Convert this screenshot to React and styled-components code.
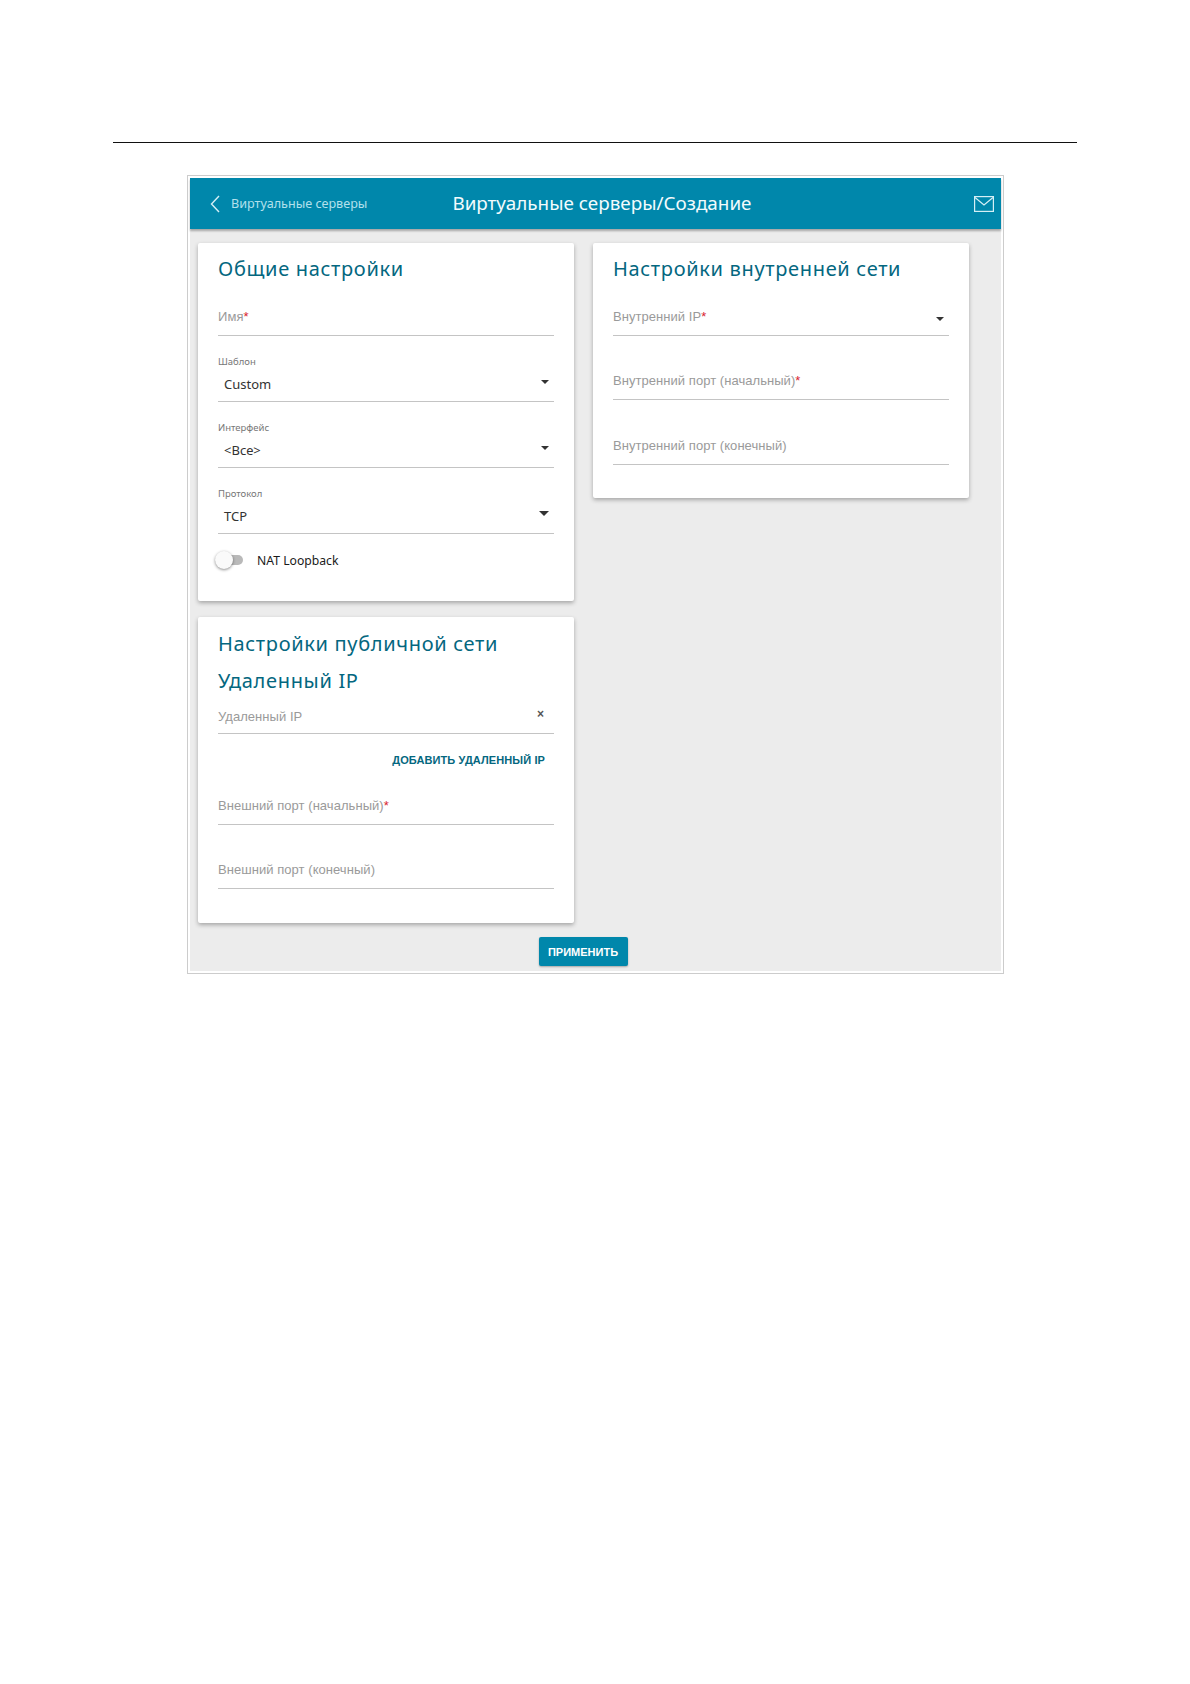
import React from 'react';
import styled, { createGlobalStyle } from 'styled-components';

const GlobalStyle = createGlobalStyle`
  html, body {
    margin: 0;
    padding: 0;
    background: #fff;
  }
  * {
    box-sizing: border-box;
  }
`;

const Page = styled.div`
  width: 1190px;
  height: 1684px;
  padding-top: 142px;
  background: #fff;
  font-family: 'Noto Sans', sans-serif;
`;

const Rule = styled.div`
  width: 964px;
  height: 1px;
  margin-left: 113px;
  background: #111;
`;

const Frame = styled.div`
  width: 817px;
  height: 799px;
  margin: 32px 0 0 187px;
  padding: 2px;
  border: 1px solid #ccc;
  background: #fff;
`;

const Screen = styled.div`
  height: 100%;
  display: flex;
  flex-direction: column;
  background: #ececec;
`;

const Header = styled.header`
  height: 51px;
  flex: none;
  display: flex;
  align-items: center;
  padding: 0 7px 0 20px;
  background: #0087ab;
  box-shadow: 0 2px 2px rgba(0, 0, 0, 0.3);
`;

const BackLink = styled.div`
  flex: none;
  display: flex;
  align-items: center;
  gap: 11px;
  font-size: 12.6px;
  color: #b3e0ec;
  white-space: nowrap;

  svg {
    flex: none;
  }
`;

const HeaderTitle = styled.h1`
  margin: 0 0 2px 85px;
  font-size: 18.85px;
  font-weight: 400;
  color: #f2fbfd;
  white-space: nowrap;
`;

const MailIcon = styled.svg`
  margin-left: auto;
  display: block;
`;

const Body = styled.div`
  flex: none;
  display: flex;
  gap: 19px;
  align-items: flex-start;
  padding: 14px 0 0 8px;
`;

const Column = styled.div`
  width: 376px;
  display: flex;
  flex-direction: column;
  gap: 16px;
`;

const Card = styled.section`
  padding: ${p => p.$top}px 20px ${p => p.$bottom}px;
  background: #fff;
  border-radius: 2px;
  box-shadow: 0 2px 4px rgba(0, 0, 0, 0.3);
`;

const Title = styled.h2`
  margin: ${p => p.$gap || 0}px 0 0;
  font-size: 20px;
  line-height: 36px;
  font-weight: 400;
  letter-spacing: 0.67px;
  color: #04677f;
  white-space: nowrap;
`;

const TextField = styled.div`
  height: 35px;
  margin-top: ${p => p.$gap || 0}px;
  padding-bottom: ${p => p.$pad || 8}px;
  display: flex;
  align-items: flex-end;
  justify-content: space-between;
  border-bottom: 1px solid #c4c4c4;
  font-family: 'Liberation Sans', Arial, sans-serif;
  font-size: 13px;
  line-height: 20px;
  letter-spacing: 0.05px;
  color: #9a9a9a;
`;

const Required = styled.span`
  color: #d9232e;
`;

const SelectField = styled.div`
  height: 50px;
  margin-top: 16px;
  border-bottom: 1px solid #c4c4c4;
`;

const SelectLabel = styled.div`
  padding-top: 3px;
  font-size: 9.5px;
  line-height: 13px;
  color: #777;
`;

const SelectRow = styled.div`
  margin-top: 4px;
  padding: 0 5px 0 6px;
  display: flex;
  align-items: center;
  justify-content: space-between;
  font-size: 13px;
  line-height: 24px;
  color: #333;
`;

const Caret = styled.span`
  width: 0;
  height: 0;
  margin: ${p => p.$margin || '-5px 0 0'};
  border-style: solid;
  border-width: ${p => p.$size || 4}px ${p => p.$size || 4}px 0;
  border-color: #333 transparent transparent;
`;

const ToggleRow = styled.div`
  height: 28px;
  margin: 12px 0 0 -3px;
  display: flex;
  align-items: center;
  gap: 14px;
  font-size: 12.2px;
  color: #1a1a1a;
`;

const Toggle = styled.div`
  position: relative;
  width: 28px;
  height: 10px;
  border-radius: 5px;
  background: #b9b9b9;
`;

const Thumb = styled.span`
  position: absolute;
  left: 0;
  top: -4px;
  width: 18px;
  height: 18px;
  border-radius: 50%;
  background: #fafafa;
  box-shadow: 0 1px 3px rgba(0, 0, 0, 0.45);
`;

const Close = styled.span`
  margin: 0 10px 7px 0;
  font-size: 12px;
  line-height: 12px;
  font-weight: 700;
  color: #555;
`;

const LinkRow = styled.div`
  margin-top: 19px;
  padding-right: 9px;
  text-align: right;
  font-family: 'Liberation Sans', Arial, sans-serif;
  font-size: 11px;
  line-height: 14px;
  font-weight: 700;
  letter-spacing: 0.1px;
  color: #04677f;
`;

const Footer = styled.div`
  display: flex;
  justify-content: center;
  padding: 14px 25px 0 0;
`;

const ApplyButton = styled.button`
  width: 89px;
  height: 29px;
  padding: 0;
  border: none;
  border-radius: 2px;
  background: #0087ab;
  box-shadow: 0 1px 2px rgba(0, 0, 0, 0.3);
  font-family: 'Liberation Sans', Arial, sans-serif;
  font-size: 11px;
  font-weight: 700;
  color: #fff;
`;

const Select = ({ label, value, caret }) => (
  <SelectField>
    <SelectLabel>{label}</SelectLabel>
    <SelectRow>
      {value}
      <Caret $size={caret} />
    </SelectRow>
  </SelectField>
);

const Field = ({ label, required, gap, children, pad }) => (
  <TextField $gap={gap} $pad={pad}>
    <span>
      {label}
      {required && <Required>*</Required>}
    </span>
    {children}
  </TextField>
);

const App = () => (
  <Page>
    <GlobalStyle />
    <Rule />
    <Frame>
      <Screen>
        <Header>
          <BackLink>
            <svg width="10" height="18" viewBox="0 0 10 18" fill="none">
              <path d="M9 1 1.5 9 9 17" stroke="#d5eff6" strokeWidth="1.4" />
            </svg>
            Виртуальные серверы
          </BackLink>
          <HeaderTitle>Виртуальные серверы/Создание</HeaderTitle>
          <MailIcon width="20" height="16" viewBox="0 0 20 16" fill="none">
            <rect x="0.6" y="0.6" width="18.8" height="14.8" stroke="#d5eff6" strokeWidth="1.2" />
            <path d="M1 1.5 10 9l9-7.5" stroke="#d5eff6" strokeWidth="1.2" />
          </MailIcon>
        </Header>
        <Body>
          <Column>
            <Card $top={8} $bottom={27}>
              <Title>Общие настройки</Title>
              <Field label="Имя" required gap={14} />
              <Select label="Шаблон" value="Custom" />
              <Select label="Интерфейс" value="<Все>" />
              <Select label="Протокол" value="TCP" caret={5} />
              <ToggleRow>
                <Toggle>
                  <Thumb />
                </Toggle>
                NAT Loopback
              </ToggleRow>
            </Card>
            <Card $top={9} $bottom={34}>
              <Title>Настройки публичной сети</Title>
              <Title $gap={1}>Удаленный IP</Title>
              <Field label="Удаленный IP" pad={6}>
                <Close>×</Close>
              </Field>
              <LinkRow>ДОБАВИТЬ УДАЛЕННЫЙ IP</LinkRow>
              <Field label="Внешний порт (начальный)" required gap={23} />
              <Field label="Внешний порт (конечный)" gap={29} />
            </Card>
          </Column>
          <Column>
            <Card $top={8} $bottom={33}>
              <Title>Настройки внутренней сети</Title>
              <Field label="Внутренний IP" required gap={14}>
                <Caret $margin="0 5px 6px 0" />
              </Field>
              <Field label="Внутренний порт (начальный)" required gap={29} />
              <Field label="Внутренний порт (конечный)" gap={30} />
            </Card>
          </Column>
        </Body>
        <Footer>
          <ApplyButton>ПРИМЕНИТЬ</ApplyButton>
        </Footer>
      </Screen>
    </Frame>
  </Page>
);

export default App;
